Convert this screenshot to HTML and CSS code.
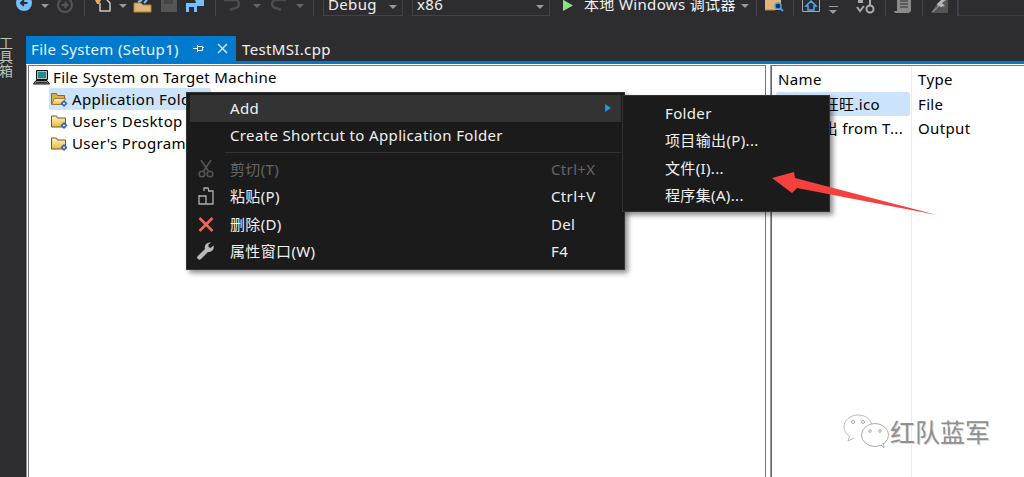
FILE: index.html
```html
<!DOCTYPE html>
<html lang="zh">
<head>
<meta charset="utf-8">
<title>File System (Setup1)</title>
<link rel="stylesheet" href="styles.css">
</head>
<body>
<svg class="defs" width="0" height="0"><defs><linearGradient id="fold" x1="0" y1="0" x2="0" y2="1"><stop offset="0" stop-color="#fff3bf"/><stop offset="1" stop-color="#e8b848"/></linearGradient></defs></svg>
<header class="toolbar">
  <span class="grip"></span>
  <svg class="ti m-back" width="16" height="11" viewBox="0 0 16 11"><circle cx="8" cy="3" r="8" fill="#75beff"/><path d="M11.500 3H5.500M8 .2 5 3l3 2.800" fill="none" stroke="#2d2d30" stroke-width="2"/></svg>
  <span class="caret m-c1"></span>
  <svg class="ti m-fwd" width="16" height="13" viewBox="0 0 16 13"><circle cx="8" cy="5" r="7" fill="none" stroke="#555" stroke-width="2"/><path d="M4.500 5H10M7.500 2l3 3-3 3" fill="none" stroke="#555" stroke-width="2"/></svg>
  <span class="sep m-s1"></span>
  <svg class="ti m-new" width="18" height="12" viewBox="0 0 18 12"><path d="M6 3v8h10V3l-3-3" fill="none" stroke="#c8c8c8" stroke-width="1.500" stroke-linejoin="round"/><path d="M1 0h6L5 4H3z" fill="#e8a65f"/></svg>
  <span class="caret m-c2"></span>
  <svg class="ti m-open" width="19" height="13" viewBox="0 0 19 13"><path d="M1 3h7l2 2h8v7H1z" fill="#dcb67a" stroke="#b5832e"/><path d="M5 2 9 0M11 3l3-3" stroke="#75beff" stroke-width="2"/></svg>
  <svg class="ti m-save" width="16" height="12" viewBox="0 0 16 12"><path d="M0 0h16v12H0z" fill="#555"/><path d="M3 0h9v4H3z" fill="#444"/></svg>
  <svg class="ti m-saveall" width="19" height="13" viewBox="0 0 19 13"><path d="M0 3h11v9H0z" fill="#75beff"/><path d="M3 7h5v5H3z" fill="#2d2d30"/><path d="M9 0h9v6h-7z" fill="#75beff"/></svg>
  <span class="sep m-s2"></span>
  <svg class="ti m-undo" width="20" height="11" viewBox="0 0 20 11"><path d="M2 0h11a4 4 0 0 1 0 8l-5 2" fill="none" stroke="#4c4c4f" stroke-width="2.500"/></svg>
  <span class="caret dim m-c3"></span>
  <svg class="ti m-redo" width="18" height="11" viewBox="0 0 18 11"><path d="M16 0H6a4 4 0 0 0 0 8l5 2" fill="none" stroke="#4c4c4f" stroke-width="2.500"/></svg>
  <span class="caret dim m-c4"></span>
  <span class="sep m-s3"></span>
  <div class="combo combo-debug"><span>Debug</span><span class="caret"></span></div>
  <div class="combo combo-x86"><span>x86</span><span class="caret"></span></div>
  <svg class="ti m-play" width="10" height="11" viewBox="0 0 10 11"><path d="M0 0h.5L10 5.500 0 11z" fill="#8ae28a"/></svg>
  <span class="run-label">本地 Windows 调试器</span>
  <span class="caret m-c5"></span>
  <span class="sep m-s4"></span>
  <svg class="ti m-find" width="20" height="12" viewBox="0 0 20 12"><path d="M0 0h16v10H0z" fill="#dcb67a"/><path d="M0 10h10" stroke="#b5832e"/><circle cx="13" cy="6" r="3" fill="#2d2d30" stroke="#3f9cf0" stroke-width="1.500"/><path d="m15 8 3 3" stroke="#3f9cf0" stroke-width="2"/></svg>
  <span class="sep m-s5"></span>
  <svg class="ti m-home" width="18" height="12" viewBox="0 0 18 12"><path d="M.500 0v11.500h17V0" fill="none" stroke="#aaa"/><path d="M9 1 4 6h2v4h6V6h2z" fill="none" stroke="#4aa8f5" stroke-width="1.500"/></svg>
  <span class="lined-caret m-c6"></span>
  <span class="grip small m-g2"></span>
  <svg class="ti m-branch" width="19" height="14" viewBox="0 0 19 14"><circle cx="14" cy="9" r="3.500" fill="none" stroke="#aaa" stroke-width="2"/><path d="M14 0v6M1 7l3 4 4-5" fill="none" stroke="#aaa" stroke-width="2"/><path d="M2 0h5v3H2z" fill="#aaa"/></svg>
  <span class="sep m-s6"></span>
  <svg class="ti m-doc" width="18" height="14" viewBox="0 0 18 14"><path d="M3 0v11H0l1 2h14l2-2V0z" fill="#8a8a8a"/><path d="M6 1h8M6 4h8M6 7h8" stroke="#2d2d30" stroke-width="1.200"/></svg>
  <span class="sep m-s7"></span>
  <svg class="ti m-tool" width="19" height="14" viewBox="0 0 19 14"><path d="M1 13h17V0H12L6 5z" fill="#555"/><path d="M2 12 8 6l-1-2 4-4h5l-4 3 3 3-4 1-2-1-6 6z" fill="#b5b5b5"/></svg>
  <span class="sep m-s8"></span>
  <div class="searchbox"></div>
</header>

<div class="workspace">
  <aside class="side"><span class="side-label">工具箱</span></aside>
  <main class="docs">
    <nav class="tabs">
      <div class="tab active">
        <span>File System (Setup1)</span>
        <svg class="pin" width="12" height="12" viewBox="0 0 12 12"><path d="M4.500 3.500h5v4h-5zM4.500 5.500H0M4.500 2v7M9.500 4.500H11" fill="none" stroke="#fff"/></svg>
        <svg class="close" width="11" height="11" viewBox="0 0 11 11"><path d="m1 1 9 9M10 1l-9 9" stroke="#cfe6f6" stroke-width="1.500"/></svg>
      </div>
      <div class="tab">TestMSI.cpp</div>
    </nav>
    <div class="tab-rule"></div>
    <div class="panes">
      <section class="pane-left">
        <div class="tree-row root">
          <svg class="node" width="17" height="15" viewBox="0 0 17 15"><path d="M3.500 .5h11v9h-11z" fill="#b8b8b8" stroke="#111"/><path d="M5 2h8v6H5z" fill="#1d8a94"/><path d="M3 10.500h11l2.500 3.500H.5z" fill="#8c8c8c" stroke="#111"/><path d="M3 12.500h11" stroke="#333"/></svg>
          <span>File System on Target Machine</span>
        </div>
        <div class="tree-row child selected">
          <svg class="node" width="17" height="15" viewBox="0 0 17 15"><path d="M.500 12.500V1.500h5l1 2h7v4" fill="#d8b050" stroke="#8a6a28"/><path d="M.500 12.500l3-6h11l-3 6z" fill="url(#fold)" stroke="#a07c30"/><path d="m13 8 3.500 3.500-3.500 3.500-3.500-3.500z" fill="#2f62b8"/><path d="m13 10.300 1.200 1.200-1.200 1.200-1.200-1.200z" fill="#fff"/></svg>
          <span>Application Folder</span>
        </div>
        <div class="tree-row child">
          <svg class="node" width="17" height="15" viewBox="0 0 17 15"><path d="M.500 13V2h5l1 2h8v9z" fill="url(#fold)" stroke="#6e5a2a"/><path d="m13 8 3.500 3.500-3.500 3.500-3.500-3.500z" fill="#2f62b8"/><path d="m13 10.300 1.200 1.200-1.200 1.200-1.200-1.200z" fill="#fff"/></svg>
          <span>User's Desktop</span>
        </div>
        <div class="tree-row child">
          <svg class="node" width="17" height="15" viewBox="0 0 17 15"><path d="M.500 13V2h5l1 2h8v9z" fill="url(#fold)" stroke="#6e5a2a"/><path d="m13 8 3.500 3.500-3.500 3.500-3.500-3.500z" fill="#2f62b8"/><path d="m13 10.300 1.200 1.200-1.200 1.200-1.200-1.200z" fill="#fff"/></svg>
          <span>User's Programs Menu</span>
        </div>
      </section>
      <div class="splitter"></div>
      <section class="pane-right">
        <div class="list-row head"><span class="col-name">Name</span><span class="col-type">Type</span></div>
        <div class="list-row sel"><span class="col-name indent">阿里旺旺.ico</span><span class="col-type">File</span></div>
        <div class="list-row"><span class="col-name indent2">主输出 from T...</span><span class="col-type">Output</span></div>
      </section>
    </div>
  </main>
</div>

<div class="menu main-menu">
  <div class="mi hot"><span class="mi-icon"></span><span class="mi-label">Add</span><span class="sub-arrow"></span></div>
  <div class="mi"><span class="mi-icon"></span><span class="mi-label">Create Shortcut to Application Folder</span></div>
  <div class="mi-sep"></div>
  <div class="mi off"><span class="mi-icon"><svg width="16" height="18" viewBox="0 0 16 18"><path d="M3 0l8 12M13 0 5 12" stroke="#555" stroke-width="1.600" fill="none"/><circle cx="4" cy="14" r="2.800" fill="none" stroke="#555" stroke-width="1.600"/><circle cx="12" cy="14" r="2.800" fill="none" stroke="#555" stroke-width="1.600"/></svg></span><span class="mi-label">剪切(T)</span><span class="mi-key">Ctrl+X</span></div>
  <div class="mi"><span class="mi-icon"><svg width="16" height="18" viewBox="0 0 16 18"><path d="M6 4V1h4l1 3" fill="none" stroke="#b0b0b0" stroke-width="1.300"/><path d="M10 4h5v13H1V8" fill="none" stroke="#b0b0b0" stroke-width="1.300"/><path d="M1 9h7v8" fill="none" stroke="#b0b0b0" stroke-width="1.300"/></svg></span><span class="mi-label">粘贴(P)</span><span class="mi-key">Ctrl+V</span></div>
  <div class="mi mi-gap"><span class="mi-icon"><svg width="16" height="15" viewBox="0 0 16 15"><path d="m1.500 1 13 13M14.500 1l-13 13" stroke="#f1665a" stroke-width="2.600"/></svg></span><span class="mi-label">删除(D)</span><span class="mi-key">Del</span></div>
  <div class="mi"><span class="mi-icon"><svg width="18" height="18" viewBox="0 0 18 18"><path d="M16.500 3.500 13.500 6 11.500 5 11.500 2.500 14 .6a5 5 0 0 0-6 6.400L.8 14a2.100 2.100 0 0 0 3.200 3l7-7a5 5 0 0 0 5.500-6.500z" fill="#b8b8b8"/></svg></span><span class="mi-label">属性窗口(W)</span><span class="mi-key">F4</span></div>
</div>

<div class="menu sub-menu">
  <div class="si">Folder</div>
  <div class="si">项目输出(P)...</div>
  <div class="si">文件(I)...</div>
  <div class="si">程序集(A)...</div>
</div>

<svg class="annot" width="170" height="50" viewBox="770 170 170 50"><path d="M772 178 794 172 795 178 937 215 797 188 792 193z" fill="#f54040"/></svg>

<div class="watermark">
  <svg width="46" height="36" viewBox="0 0 46 36"><path d="M15 1C7 1 1 6.500 1 13c0 4 2 7 5.500 9.500L5 27l6-3" fill="none" stroke="#bbb"/><path d="M15 1c7 0 13 4 14 10" fill="none" stroke="#bbb"/><ellipse cx="32" cy="21" rx="13.500" ry="11.500" fill="#fff" stroke="#aaa"/><path d="m38 31 3 3-.5-5" fill="#fff" stroke="#aaa"/><circle cx="10" cy="8" r="1.500" fill="none" stroke="#aaa"/><circle cx="20" cy="8" r="1.500" fill="none" stroke="#aaa"/><circle cx="27" cy="17" r="1.300" fill="none" stroke="#aaa"/><circle cx="37" cy="17" r="1.300" fill="none" stroke="#aaa"/></svg>
  <span>红队蓝军</span>
</div>
</body>
</html>
```
FILE: styles.css
```css
* { box-sizing: border-box; }
html, body { margin: 0; height: 477px; overflow: hidden; }
body {
  position: relative;
  width: 1024px;
  background: #2d2d30;
  font: 15px/20px "Noto Sans", "Noto Sans CJK SC", sans-serif;
  letter-spacing: .35px;
  color: #f1f1f1;
}
.defs { position: absolute; }

/* toolbar, cropped at the top of the picture */
.toolbar {
  display: flex;
  align-items: flex-end;
  height: 36px;
  padding-bottom: 20px;
  overflow: hidden;
}
.toolbar > * { flex: none; }
.grip { width: 4px; height: 16px; margin-left: 1px; background-image: radial-gradient(#666 40%, transparent 45%); background-size: 2px 2px; }
.grip.small { width: 5px; height: 16px; }
.caret { display: block; width: 0; height: 0; border: 4.500px solid transparent; border-top-color: #999; border-bottom: 0; margin-bottom: 8px; }
.caret.dim { border-top-color: #666; }
.sep { width: 1px; height: 16px; background: #46464a; }
.lined-caret { width: 9px; height: 9px; margin-bottom: 1px; border-top: 1px solid #999; }
.lined-caret::after { content: ""; display: block; width: 0; height: 0; margin-top: 3px; border: 4.500px solid transparent; border-top-color: #999; border-bottom: 0; }

.ti { display: block; }
.m-back { margin-left: 11px; margin-bottom: 5px; }
.m-c1 { margin-left: 9px; }
.m-fwd { margin-left: 8px; margin-bottom: 3px; }
.m-s1 { margin-left: 11px; }
.m-new { margin-left: 9px; margin-bottom: 4px; }
.m-c2 { margin-left: 7px; }
.m-open { margin-left: 6px; margin-bottom: 3px; }
.m-save { margin-left: 9px; margin-bottom: 4px; }
.m-saveall { margin-left: 9px; margin-bottom: 3px; }
.m-s2 { margin-left: 10px; }
.m-undo { margin-left: 6px; margin-bottom: 5px; }
.m-c3 { margin-left: 11px; }
.m-redo { margin-left: 9px; margin-bottom: 5px; }
.m-c4 { margin-left: 8px; }
.m-s3 { margin-left: 9px; }

.combo {
  display: flex;
  align-items: center;
  justify-content: space-between;
  height: 16px;
  margin-left: 9px;
  padding: 0 5px 0 4px;
  border: 1px solid #434346;
  border-top: 0;
  line-height: 16px;
}
.combo span:first-child { position: relative; top: -4px; }
.combo .caret { margin: 0 0 2px; }
.combo-debug { width: 80px; }
.combo-x86 { width: 138px; }
.m-play { margin-left: 13px; margin-bottom: 5px; }
.run-label { margin-left: 11px; width: 150px; line-height: 16px; height: 16px; position: relative; top: -4px; white-space: nowrap; }
.m-c5 { margin-left: 7px; }
.m-s4 { margin-left: 7px; }
.m-find { margin-left: 8px; margin-bottom: 4px; }
.m-s5 { margin-left: 8px; }
.m-home { margin-left: 8px; margin-bottom: 4px; }
.m-c6 { margin-left: 9px; }
.m-g2 { margin-left: 5px; }
.m-branch { margin-left: 8px; margin-bottom: 2px; }
.m-s6 { margin-left: 10px; }
.m-doc { margin-left: 8px; margin-bottom: 2px; }
.m-s7 { margin-left: 10px; }
.m-tool { margin-left: 7px; margin-bottom: 2px; }
.m-s8 { margin-left: 8px; }
.searchbox { width: 70px; height: 16px; border-bottom: 1px solid #3f3f46; border-left: 1px solid #3f3f46; }

/* workspace */
.workspace { display: flex; height: 441px; }
.side { flex: none; width: 26px; overflow: hidden; }
.side-label {
  display: block;
  writing-mode: vertical-rl;
  margin-left: -2px;
  font-size: 14px;
  line-height: 15px;
  letter-spacing: 0;
  color: #b8c4b8;
}
.docs { flex: 1; display: flex; flex-direction: column; min-width: 0; }
.tabs { display: flex; height: 25px; }
.tab { display: flex; align-items: center; padding: 0 5px 0 6px; }
.tab.active { width: 210px; padding-left: 5px; background: #007acc; color: #eaf5fc; }
.tab .pin { margin-left: 14px; }
.tab .close { margin-left: 12px; }
.tab-rule { height: 3px; background: #007acc; }
.panes { flex: 1; display: flex; background: #fff; padding-top: 1px; }

.pane-left { flex: none; width: 738px; border: 1px solid #777; border-bottom: 0; margin-left: 2px; box-shadow: -1px 0 0 #fff, -2px 0 0 #8e8e9c; color: #000; }
.tree-row { display: flex; align-items: center; height: 22px; white-space: nowrap; }
.tree-row.root { padding-left: 4px; }
.tree-row .node { flex: none; margin-right: 3px; }
.tree-row.child { width: 162px; margin-left: 20px; padding-left: 2px; }
.tree-row.child .node { margin-right: 4px; }
.tree-row.selected { background: #cce4fb; border-radius: 2px; }

.splitter { flex: none; width: 5px; border-right: 1px solid #9a9aa4; }
.pane-right { flex: 1; border-left: 1px solid #666; border-top: 1px solid #777; color: #000; position: relative; }
.pane-right::after { content: ""; position: absolute; top: 0; bottom: 0; left: 139px; width: 1px; background: #e3eef9; }
.list-row { display: flex; height: 24px; align-items: center; margin-left: 4px; white-space: nowrap; }
.list-row.head { height: 26px; }
.list-row.sel .col-name { background: #cce4fb; border-radius: 2px; }
.col-name { width: 134px; height: 24px; line-height: 24px; padding-left: 2px; margin-right: 8px; overflow: hidden; }
.col-name.indent { padding-left: 17px; }
.col-name.indent2 { padding-left: 16px; }
.col-type { flex: none; }

/* menus */
.menu {
  position: absolute;
  background: #1b1b1c;
  border: 1px solid #333337;
  box-shadow: 3px 3px 5px rgba(0,0,0,.45);
}
.main-menu { left: 186px; top: 92px; width: 439px; height: 178px; padding: 2px 3px; }
.mi { display: flex; align-items: center; height: 27px; padding-bottom: 1px; }
.mi.hot { background: #333334; }
.mi.off { color: #656565; }
.mi-gap { margin-top: 1px; }
.mi-icon { flex: none; width: 40px; display: flex; justify-content: center; padding-right: 9px; }
.mi-icon svg { display: block; }
.mi-label { flex: none; width: 321px; white-space: nowrap; }
.mi-key { white-space: nowrap; }
.mi-sep { height: 1px; margin: 3px 0 3px 35px; background: #333337; }
.sub-arrow { width: 0; height: 0; border: 4px solid transparent; border-left: 6px solid #1c97ea; border-right: 0; margin-left: 54px; }
.sub-menu { left: 622px; top: 95px; width: 208px; height: 117px; padding: 4px 0 0 42px; }
.si { height: 27.300px; line-height: 27px; white-space: nowrap; }

.annot { position: absolute; left: 770px; top: 170px; display: block; }

.watermark { position: absolute; left: 843px; top: 414px; display: flex; align-items: center; gap: 1px; color: #8f8f8f; font-size: 25px; letter-spacing: 0; line-height: 36px; text-shadow: 1px 1px 0 #ddd; }
.watermark svg { display: block; }
```
